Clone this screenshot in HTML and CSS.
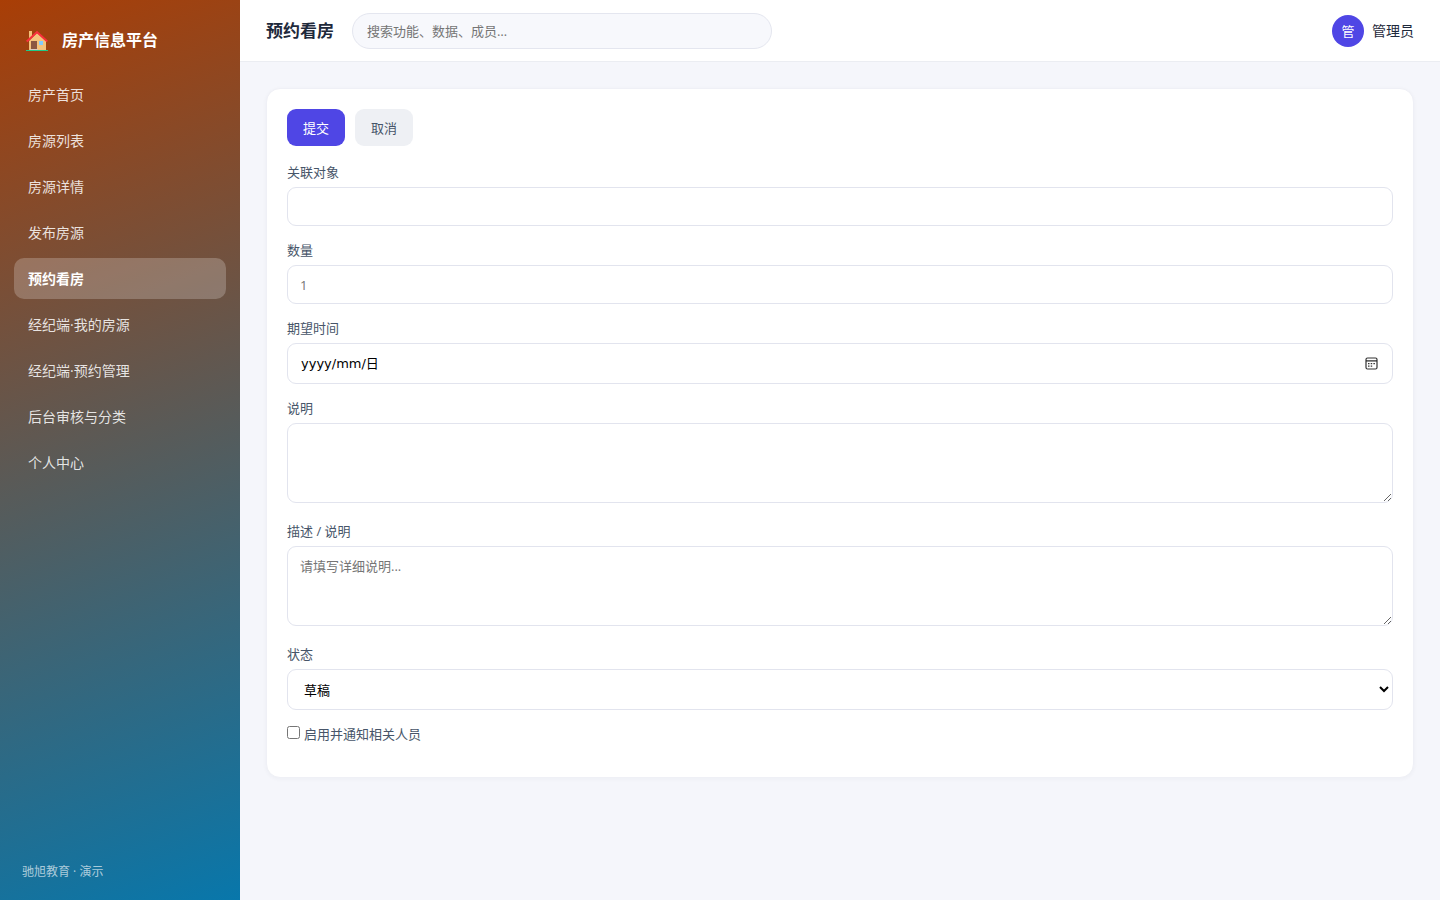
FILE: index.html
```html
<!DOCTYPE html>
<html lang="zh-CN">
<head>
<meta charset="utf-8">
<meta name="viewport" content="width=device-width, initial-scale=1">
<title>预约看房</title>
<link rel="stylesheet" href="styles.css">
</head>
<body>
<div class="app">
  <aside class="sidebar">
    <div class="brand">
      <svg class="brand-icon" viewBox="0 0 22 22" aria-hidden="true">
        <path fill="#f2c078" d="M3 1h3v7H3z"/>
        <path fill="#f4c27c" d="M11 3l9 8v9H3v-9z"/>
        <path fill="none" stroke="#f92f3c" stroke-width="2" d="M.7 11.5L11 2l10.3 9.5"/>
        <path fill="#8b5742" d="M5 11h6v8H5z"/>
        <path fill="#d8c8c0" d="M4 19h8v1H4z"/>
        <path fill="#83cbff" d="M13 11h4v4h-4z"/>
        <path fill="#20c987" d="M0 20h22v1H0z"/>
      </svg>
      <span>房产信息平台</span>
    </div>
    <nav class="nav">
      <a href="#">房产首页</a>
      <a href="#">房源列表</a>
      <a href="#">房源详情</a>
      <a href="#">发布房源</a>
      <a href="#" class="active" aria-current="page">预约看房</a>
      <a href="#">经纪端·我的房源</a>
      <a href="#">经纪端·预约管理</a>
      <a href="#">后台审核与分类</a>
      <a href="#">个人中心</a>
    </nav>
    <div class="sidebar-foot">驰旭教育 · 演示</div>
  </aside>
  <div class="page">
    <header class="topbar">
      <h1>预约看房</h1>
      <input class="search" type="search" aria-label="搜索" placeholder="搜索功能、数据、成员…">
      <div class="user"><span class="avatar">管</span><span>管理员</span></div>
    </header>
    <main class="content">
      <form class="card">
        <div class="actions">
          <button class="btn primary" type="button">提交</button>
          <button class="btn" type="button">取消</button>
        </div>
        <div class="field">
          <label for="target">关联对象</label>
          <input class="control" id="target" type="text">
        </div>
        <div class="field">
          <label for="count">数量</label>
          <input class="control" id="count" type="number" placeholder="1">
        </div>
        <div class="field">
          <label for="date">期望时间</label>
          <div class="date-wrap">
            <input class="control tall date" id="date" type="text" placeholder="yyyy/mm/日">
            <button class="picker" type="button" aria-label="选择日期">
              <svg viewBox="0 0 13 13" aria-hidden="true">
                <rect x="1" y="1" width="11" height="11" rx="1.5" fill="none" stroke="#333" stroke-width="1.2"/>
                <path stroke="#222" stroke-width="1.2" d="M1 3.9h11"/>
                <path fill="#333" d="M3 6h1.5v1.3H3zM5.7 6h1.5v1.3H5.7zM8.4 6h1.5v1.3H8.4zM3 8.5h1.5v1.3H3zM5.7 8.5h1.5v1.3H5.7z"/>
              </svg>
            </button>
          </div>
        </div>
        <div class="field area">
          <label for="note">说明</label>
          <textarea class="control" id="note"></textarea>
        </div>
        <div class="field area">
          <label for="detail">描述 / 说明</label>
          <textarea class="control" id="detail" placeholder="请填写详细说明..."></textarea>
        </div>
        <div class="field">
          <label for="status">状态</label>
          <select class="control tall" id="status"><option>草稿</option></select>
        </div>
        <label class="check"><input type="checkbox"><span>启用并通知相关人员</span></label>
      </form>
    </main>
  </div>
</div>
</body>
</html>
```
FILE: styles.css
```css
* { box-sizing: border-box; }
body {
  margin: 0;
  background: #f5f6fb;
  color: #1e293b;
  font: 14px/21px "Open Sans", "Noto Sans CJK SC", sans-serif;
}
input, textarea, select, button { font: inherit; }
.app { display: flex; min-height: 100vh; }

.sidebar {
  flex: 0 0 240px;
  display: flex;
  flex-direction: column;
  padding: 22px 14px 18px;
  background: linear-gradient(160deg, #a93e06 0%, #0877ab 100%);
  color: #fff;
}
.brand {
  display: flex;
  align-items: center;
  gap: 14px;
  padding: 6px 12px 22px;
  font-size: 16px;
  line-height: 24px;
  font-weight: 700;
}
.brand-icon { width: 22px; height: 22px; margin-top: 2px; }
.nav { display: flex; flex-direction: column; gap: 5px; }
.nav a {
  padding: 10px 14px;
  border-radius: 10px;
  color: rgba(255, 255, 255, .85);
  text-decoration: none;
}
.nav .active { background: rgba(255, 255, 255, .22); color: #fff; font-weight: 700; }
.sidebar-foot {
  margin-top: auto;
  padding: 0 8px;
  font-size: 12px;
  color: rgba(255, 255, 255, .65);
}

.page { flex: 1; min-width: 0; }
.topbar {
  display: flex;
  align-items: center;
  gap: 18px;
  min-height: 62px;
  padding: 0 26px;
  background: #fff;
  border-bottom: 1px solid #ebedf2;
}
h1 { margin: 0; font-size: 17px; line-height: 26px; font-weight: 700; }
.search {
  flex: 0 1 420px;
  min-width: 0;
  height: 36px;
  padding: 0 14px;
  border: 1px solid #e4e6ef;
  border-radius: 18px;
  background: #f7f8fc;
  font-size: 13px;
  appearance: none;
}
.search::placeholder, .control::placeholder { color: #757575; }
.user { display: flex; align-items: center; gap: 8px; margin-left: auto; }
.avatar {
  width: 32px;
  border-radius: 50%;
  background: #4f46e5;
  color: #fff;
  font-size: 13px;
  line-height: 32px;
  text-align: center;
}

.content { padding: 26px; }
.card {
  padding: 20px;
  border: 1px solid #eff0f6;
  border-radius: 14px;
  background: #fff;
  box-shadow: 0 1px 4px rgba(30, 41, 80, .04);
  font-size: 13px;
  line-height: 20px;
  color: #475569;
}
.actions { display: flex; gap: 10px; margin-bottom: 16px; }
.btn {
  height: 37px;
  padding: 0 16px;
  border: 0;
  border-radius: 9px;
  background: #eef0f4;
  color: #475569;
}
.primary { background: #4f46e5; color: #fff; }
.field { display: flex; flex-direction: column; gap: 5px; margin-bottom: 14px; }
.area { margin-bottom: 18px; }
.control {
  width: 100%;
  height: 39px;
  padding: 9px 12px;
  border: 1px solid #e2e4ee;
  border-radius: 9px;
  background: #fff;
  color: #000;
}
.tall { height: 41px; }
.date-wrap { position: relative; }
.date {
  display: block;
  padding: 9px 40px 9px 13px;
  font-family: "DejaVu Sans", "Noto Sans CJK SC", sans-serif;
}
.date::placeholder { color: #000; }
.picker {
  position: absolute;
  top: 0;
  bottom: 0;
  right: 15px;
  display: flex;
  align-items: center;
  padding: 0;
  border: 0;
  background: none;
}
.picker svg { width: 13px; height: 13px; }
textarea.control { display: block; height: 80px; resize: vertical; }
.check { display: flex; align-items: center; gap: 4px; margin-bottom: 13px; }
.check input { width: 13px; height: 13px; margin: 0 0 3px; }
```
